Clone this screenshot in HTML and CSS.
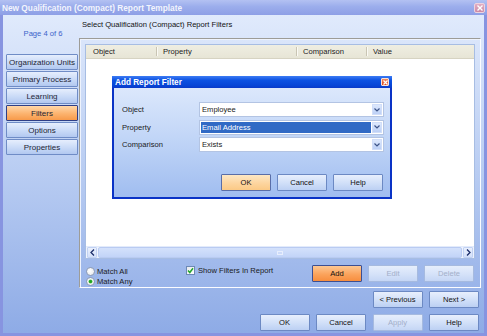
FILE: index.html
```html
<!DOCTYPE html>
<html>
<head>
<meta charset="utf-8">
<title>New Qualification (Compact) Report Template</title>
<link rel="stylesheet" href="styles.css">
</head>
<body>
<div class="window">
  <div class="titlebar">
    <span class="title">New Qualification (Compact) Report Template</span>
    <span class="win-close"><svg width="6" height="6" viewBox="0 0 6 6"><path d="M0.5 0.5L5.5 5.5M5.5 0.5L0.5 5.5" stroke="#fff" stroke-width="1.4"/></svg></span>
  </div>
  <div class="frame">
    <div class="sidebar">
      <div class="page">Page 4 of 6</div>
      <div class="nav">
        <div class="nav-btn">Organization Units</div>
        <div class="nav-btn">Primary Process</div>
        <div class="nav-btn">Learning</div>
        <div class="nav-btn active">Filters</div>
        <div class="nav-btn">Options</div>
        <div class="nav-btn">Properties</div>
      </div>
    </div>
    <div class="main">
      <div class="heading">Select Qualification (Compact) Report Filters</div>
      <div class="group">
        <div class="list">
          <div class="list-head">
            <div class="col c-object">Object</div>
            <div class="col c-property">Property</div>
            <div class="col c-comparison">Comparison</div>
            <div class="col c-value">Value</div>
          </div>
          <div class="list-body"></div>
          <div class="hscroll">
            <div class="sbtn"><svg width="5" height="7" viewBox="0 0 5 7"><path d="M4 0.5L1 3.5L4 6.5" fill="none" stroke="#1d2f6b" stroke-width="1.3"/></svg></div>
            <div class="track"><div class="thumb"><span class="grip"></span></div></div>
            <div class="sbtn"><svg width="5" height="7" viewBox="0 0 5 7"><path d="M1 0.5L4 3.5L1 6.5" fill="none" stroke="#1d2f6b" stroke-width="1.3"/></svg></div>
          </div>
        </div>
        <div class="controls">
          <div class="radios">
            <div class="radio"><span class="dot"></span>Match All</div>
            <div class="radio on"><span class="dot"></span>Match Any</div>
          </div>
          <div class="check"><span class="box"><svg width="7" height="7" viewBox="0 0 7 7"><path d="M1 3.5L2.8 5.5L6 1.2" fill="none" stroke="#22a52a" stroke-width="1.5"/></svg></span>Show Filters In Report</div>
          <div class="actions">
            <div class="btn orange">Add</div>
            <div class="btn disabled">Edit</div>
            <div class="btn disabled">Delete</div>
          </div>
        </div>
      </div>
      <div class="btn-row first">
        <div class="btn">&lt; Previous</div>
        <div class="btn">Next &gt;</div>
      </div>
      <div class="btn-row">
        <div class="btn">OK</div>
        <div class="btn">Cancel</div>
        <div class="btn disabled">Apply</div>
        <div class="btn">Help</div>
      </div>
    </div>
  </div>

  <div class="dialog">
    <div class="dlg-title">
      <span>Add Report Filter</span>
      <span class="dlg-close"><svg width="5" height="5" viewBox="0 0 5 5"><path d="M0.5 0.5L4.5 4.5M4.5 0.5L0.5 4.5" stroke="#fff" stroke-width="1.2"/></svg></span>
    </div>
    <div class="dlg-body">
      <div class="field">
        <div class="label">Object</div>
        <div class="combo"><span class="val">Employee</span><span class="drop"><svg width="6" height="4" viewBox="0 0 6 4"><path d="M0.5 0.5L3 3L5.5 0.5" fill="none" stroke="#3d5488" stroke-width="1.2"/></svg></span></div>
      </div>
      <div class="field">
        <div class="label">Property</div>
        <div class="combo"><span class="val sel">Email Address</span><span class="drop"><svg width="6" height="4" viewBox="0 0 6 4"><path d="M0.5 0.5L3 3L5.5 0.5" fill="none" stroke="#3d5488" stroke-width="1.2"/></svg></span></div>
      </div>
      <div class="field">
        <div class="label">Comparison</div>
        <div class="combo"><span class="val">Exists</span><span class="drop"><svg width="6" height="4" viewBox="0 0 6 4"><path d="M0.5 0.5L3 3L5.5 0.5" fill="none" stroke="#3d5488" stroke-width="1.2"/></svg></span></div>
      </div>
      <div class="dlg-buttons">
        <div class="btn pale">OK</div>
        <div class="btn">Cancel</div>
        <div class="btn">Help</div>
      </div>
    </div>
  </div>
</div>
</body>
</html>
```
FILE: styles.css
```css
* { box-sizing: border-box; margin: 0; padding: 0; }
html, body { width: 487px; height: 336px; overflow: hidden; }
body {
  font-family: "Liberation Sans", Arial, sans-serif;
  font-size: 7.6px;
  color: #1a1a1a;
  background: #8a98e2;
}
.window {
  position: relative;
  width: 487px;
  height: 336px;
  display: flex;
  flex-direction: column;
  background: #8794e0;
}
.titlebar {
  height: 15px;
  flex: none;
  display: flex;
  align-items: center;
  justify-content: space-between;
  padding: 0 2px 0 2px;
  background: linear-gradient(#b3c1f2, #9badec 45%, #8e9fe6);
}
.title {
  color: #f3f5fd;
  font-weight: bold;
  font-size: 8.3px;
  line-height: 10px;
}
.win-close {
  width: 11px;
  height: 10px;
  display: flex;
  align-items: center;
  justify-content: center;
  background: linear-gradient(#e2aec4, #cc8aa6);
  border: 1px solid #eed3df;
  border-radius: 2px;
}
.frame {
  flex: 1;
  display: flex;
  margin: 0 3px 3px 3px;
  background: linear-gradient(#e0eafc, #bccff3 45%, #8eabe6);
}
.sidebar {
  width: 76px;
  flex: none;
  padding: 14px 1px 0 3px;
}
.page {
  color: #3b63c9;
  text-align: center;
  line-height: 10px;
  height: 10px;
  padding-left: 2px;
}
.nav {
  margin-top: 15px;
  display: flex;
  flex-direction: column;
  gap: 1px;
}
.nav-btn {
  height: 16px;
  display: flex;
  align-items: center;
  justify-content: center;
  font-size: 8px;
  color: #1d2535;
  background: linear-gradient(#e6eefd, #c9daf7 55%, #b2c8f0);
  border: 1px solid #6f8cc6;
  border-radius: 1px;
}
.nav-btn.active {
  background: linear-gradient(#ffd7a8, #fcb36e 55%, #f79a4a);
  border-color: #2f3f86;
}
.main {
  flex: 1;
  display: flex;
  flex-direction: column;
}
.heading {
  height: 23px;
  flex: none;
  padding: 5px 0 0 3px;
  line-height: 10px;
  color: #111;
}
.group {
  height: 250px;
  flex: none;
  width: 402px;
  border-top: 1px solid #9d9c97;
  border-left: 1px solid #9d9c97;
  border-right: 1px solid #fbfcff;
  border-bottom: 1px solid #fbfcff;
  box-shadow: inset 1px 1px 0 #eef3fd;
  padding: 5px 5px 0 5px;
  display: flex;
  flex-direction: column;
}
.list {
  height: 215px;
  flex: none;
  border: 1px solid #a7bde3;
  background: #fff;
  display: flex;
  flex-direction: column;
}
.list-head {
  height: 14px;
  flex: none;
  display: flex;
  background: linear-gradient(#efeee2, #e7e5d6);
  border-bottom: 1px solid #d6d3c2;
}
.col {
  display: flex;
  align-items: center;
  padding-left: 7px;
  position: relative;
  color: #222;
}
.c-object { width: 70px; }
.c-property { width: 140px; }
.c-comparison { width: 70px; }
.c-value { flex: 1; }
.col + .col::before {
  content: "";
  position: absolute;
  left: 0;
  top: 2px;
  bottom: 2px;
  width: 1px;
  background: #c9c5b3;
  box-shadow: 1px 0 0 #fbfaf4;
}
.list-body { flex: 1; }
.hscroll {
  height: 12px;
  flex: none;
  display: flex;
  align-items: center;
  padding: 0 1px;
  background: #eef3fd;
  border-top: 1px solid #e3ebfb;
}
.sbtn {
  width: 10px;
  height: 11px;
  flex: none;
  display: flex;
  align-items: center;
  justify-content: center;
  background: linear-gradient(#eaf0fd, #d3e0fa);
  border: 1px solid #c2d2f3;
  border-radius: 1px;
}
.track {
  flex: 1;
  height: 11px;
  padding: 0 1px;
  display: flex;
}
.thumb {
  flex: 1;
  display: flex;
  align-items: center;
  justify-content: center;
  background: linear-gradient(#d4e1fb, #c2d4f8);
  border: 1px solid #b9cbf2;
  border-radius: 2px;
}
.grip {
  width: 6px;
  height: 4px;
  border: 1px solid #e7eefd;
  background: #cddbf9;
}
.controls {
  margin-top: 6px;
  height: 21px;
  display: flex;
  padding-left: 1px;
}
.radios {
  width: 100px;
  flex: none;
  padding-top: 1px;
}
.radio {
  height: 10px;
  display: flex;
  align-items: center;
  gap: 2px;
  color: #1a1a1a;
}
.dot {
  width: 9px;
  height: 9px;
  border-radius: 50%;
  border: 1px solid #8d9bb5;
  background: radial-gradient(circle at 40% 40%, #ffffff, #e4e6ea);
  display: flex;
  align-items: center;
  justify-content: center;
}
.radio.on .dot::after {
  content: "";
  width: 3px;
  height: 3px;
  border-radius: 50%;
  background: #1fa51f;
  box-shadow: 0 0 0 0.5px #55c255;
}
.check {
  display: flex;
  align-items: flex-start;
  gap: 3px;
  padding-top: 1px;
  height: 10px;
  line-height: 9px;
  width: 126px;
  flex: none;
}
.box {
  width: 9px;
  height: 9px;
  border: 1px solid #6d89b5;
  background: linear-gradient(135deg, #e6e8ec, #ffffff);
  display: flex;
  align-items: center;
  justify-content: center;
}
.actions {
  display: flex;
  gap: 6px;
  height: 17px;
}
.btn {
  width: 50px;
  height: 17px;
  display: flex;
  align-items: center;
  justify-content: center;
  color: #111;
  background: linear-gradient(#e8effd, #d0dff8 55%, #bcd0f3);
  border: 1px solid #6c89c3;
  border-radius: 1px;
}
.btn.disabled {
  color: #a3afc9;
  border-color: #a6badf;
  background: linear-gradient(#e6eefc, #d5e2f9 55%, #c5d6f5);
}
.btn.orange {
  background: linear-gradient(#fdc893, #fba35c 55%, #f78e3e);
  border-color: #3c4f93;
}
.btn.pale {
  background: linear-gradient(#fee8c4, #fdd59f 55%, #fbc985);
  border-color: #5a6ea8;
}
.btn-row {
  display: flex;
  justify-content: flex-end;
  gap: 6.5px;
  padding-right: 5px;
  margin-top: 6px;
  height: 17px;
  flex: none;
}
.btn-row.first { margin-top: 3px; }

/* dialog overlay */
.dialog {
  position: absolute;
  left: 112px;
  top: 76px;
  width: 280px;
  height: 123px;
  display: flex;
  flex-direction: column;
  border: 2px solid #0a33c6;
  border-top: 0;
  background: linear-gradient(#e2ecfd, #c2d6f7 50%, #a0bdf0);
}
.dlg-title {
  height: 12px;
  flex: none;
  display: flex;
  align-items: center;
  justify-content: space-between;
  margin: 0 -2px;
  padding: 0 3px;
  color: #fff;
  font-weight: bold;
  font-size: 8.2px;
  background: linear-gradient(#3d7cf4, #0d52e2 35%, #0745d6 80%, #0a3ac8);
}
.dlg-close {
  width: 8px;
  height: 8px;
  display: flex;
  align-items: center;
  justify-content: center;
  background: linear-gradient(#f08a60, #d9481e);
  border: 1px solid #fbe2d6;
  border-radius: 1px;
}
.dlg-body {
  flex: 1;
  padding: 14px 6px 0 8px;
  display: flex;
  flex-direction: column;
  gap: 2.5px;
}
.field {
  height: 15px;
  display: flex;
  align-items: center;
}
.label {
  width: 77px;
  flex: none;
  color: #1a1a1a;
}
.combo {
  flex: 1;
  height: 15px;
  display: flex;
  align-items: center;
  background: #fff;
  border: 1px solid #b3c4e3;
  padding: 1px;
}
.val {
  flex: 1;
  height: 100%;
  display: flex;
  align-items: center;
  padding-left: 1px;
  margin-right: 1px;
}
.val.sel {
  background: #316ac5;
  color: #fff;
}
.drop {
  width: 10px;
  height: 11px;
  flex: none;
  display: flex;
  align-items: center;
  justify-content: center;
  background: linear-gradient(#dde8fd, #bcd0f6);
  border: 1px solid #d1def9;
}
.dlg-buttons {
  margin-top: 19.5px;
  display: flex;
  justify-content: flex-end;
  gap: 6px;
  padding-right: 1px;
}
```
